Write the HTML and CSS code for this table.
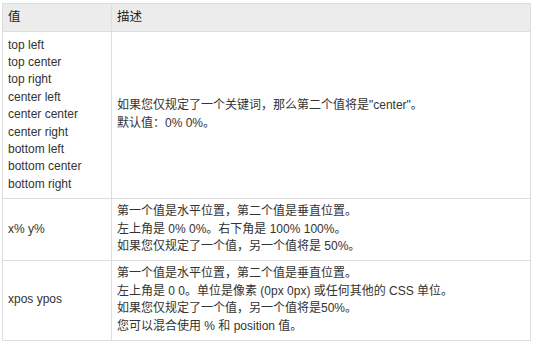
FILE: index.html
```html
<!DOCTYPE html>
<html lang="zh">
<head>
<meta charset="utf-8">
<link rel="stylesheet" href="styles.css">
</head>
<body>
<table class="ref">
  <thead>
    <tr><th class="c1">值</th><th>描述</th></tr>
  </thead>
  <tbody>
    <tr>
      <td class="c1">top left<br>top center<br>top right<br>center left<br>center center<br>center right<br>bottom left<br>bottom center<br>bottom right</td>
      <td>如果您仅规定了一个关键词，那么第二个值将是"center"。<br>默认值：0% 0%。</td>
    </tr>
    <tr>
      <td class="c1">x% y%</td>
      <td>第一个值是水平位置，第二个值是垂直位置。<br>左上角是 0% 0%。右下角是 100% 100%。<br>如果您仅规定了一个值，另一个值将是 50%。</td>
    </tr>
    <tr>
      <td class="c1">xpos ypos</td>
      <td>第一个值是水平位置，第二个值是垂直位置。<br>左上角是 0 0。单位是像素 (0px 0px) 或任何其他的 CSS 单位。<br>如果您仅规定了一个值，另一个值将是50%。<br>您可以混合使用 % 和 position 值。</td>
    </tr>
  </tbody>
</table>
</body>
</html>
```
FILE: styles.css
```css
html, body {
  margin: 0;
  padding: 0;
  background: #ffffff;
}
body {
  padding: 3px 0 0 2px;
  font-family: "Liberation Sans", "Noto Sans CJK SC", sans-serif;
  font-size: 12px;
  color: #333333;
}
.ref {
  border-collapse: collapse;
  width: 529px;
  line-height: 17.4px;
}
.ref th, .ref td {
  border: 1px solid #dddddd;
  text-align: left;
  vertical-align: middle;
  padding: 4.5px 5px;
}
.ref th {
  background: #ececec;
  font-weight: normal;
  color: #222222;
  font-size: 12.5px;
  height: 18px;
}
.ref .c1 {
  width: 98px;
}
```
